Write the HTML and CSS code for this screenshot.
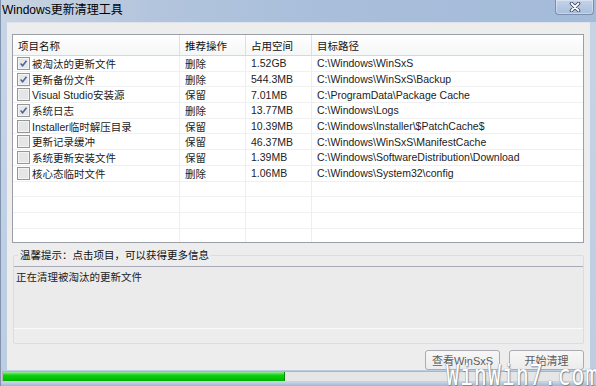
FILE: index.html
```html
<!DOCTYPE html>
<html lang="zh-CN">
  <head>
    <meta charset="UTF-8" />
    <meta name="viewport" content="width=device-width, initial-scale=1.0" />
    <title>Windows更新清理工具</title>
    <link rel="stylesheet" href="styles.css">
  </head>
  <body>
    <div class="window">
      <div class="titlebar">
        <span class="title">Windows更新清理工具</span>
        <button class="close" title="关闭">
          <svg width="12" height="10" viewBox="0 0 12 10">
            <path d="M2.5 1.5 L9.5 8.5 M9.5 1.5 L2.5 8.5" stroke="#3b4a60" stroke-width="3.6" stroke-linecap="round" />
            <path d="M2.5 1.5 L9.5 8.5 M9.5 1.5 L2.5 8.5" stroke="#fff" stroke-width="1.8" stroke-linecap="round" />
          </svg>
        </button>
      </div>

      <div class="client">
        <div class="list">
          <div class="row head">
            <div class="cell">项目名称</div>
            <div class="cell">推荐操作</div>
            <div class="cell">占用空间</div>
            <div class="cell">目标路径</div>
          </div>
          <div id="rows"></div>
        </div>

        <fieldset class="tips">
          <legend>温馨提示：点击项目，可以获得更多信息</legend>
          <div class="status">正在清理被淘汰的更新文件</div>
        </fieldset>

        <div class="actions">
          <button class="btn">查看WinSxS</button>
          <button class="btn">开始清理</button>
        </div>
      </div>

      <div class="progress">
        <div class="progress-fill" style="width: 47.7%"></div>
      </div>
      <div class="bottom-frame"></div>
    </div>

    <div class="watermark">WinWin7.com</div>

    <script>
      const items = [
        { name: "被淘汰的更新文件", action: "删除", size: "1.52GB", path: "C:\\Windows\\WinSxS", checked: true },
        { name: "更新备份文件", action: "删除", size: "544.3MB", path: "C:\\Windows\\WinSxS\\Backup", checked: true },
        { name: "Visual Studio安装源", action: "保留", size: "7.01MB", path: "C:\\ProgramData\\Package Cache", checked: false },
        { name: "系统日志", action: "删除", size: "13.77MB", path: "C:\\Windows\\Logs", checked: true },
        { name: "Installer临时解压目录", action: "保留", size: "10.39MB", path: "C:\\Windows\\Installer\\$PatchCache$", checked: false },
        { name: "更新记录缓冲", action: "保留", size: "46.37MB", path: "C:\\Windows\\WinSxS\\ManifestCache", checked: false },
        { name: "系统更新安装文件", action: "保留", size: "1.39MB", path: "C:\\Windows\\SoftwareDistribution\\Download", checked: false },
        { name: "核心态临时文件", action: "删除", size: "1.06MB", path: "C:\\Windows\\System32\\config", checked: false },
      ];

      const checkOn =
        '<svg width="13" height="13" viewBox="0 0 13 13"><rect x="0.5" y="0.5" width="12" height="12" fill="#f4f4f4" stroke="#969696"/><rect x="2" y="2" width="9" height="9" fill="#e6e7e9"/><path d="M3.6 6.6 L5.6 8.8 L9.5 3.7" fill="none" stroke="#4a6298" stroke-width="1.5"/></svg>';
      const checkOff =
        '<svg width="13" height="13" viewBox="0 0 13 13"><rect x="0.5" y="0.5" width="12" height="12" fill="#f4f4f4" stroke="#969696"/><rect x="2" y="2" width="9" height="9" fill="#e4e5e7"/></svg>';

      const rows = document.getElementById("rows");

      items.forEach((item) => {
        const row = document.createElement("div");
        row.className = "row";
        row.innerHTML = `
          <div class="cell name">${item.checked ? checkOn : checkOff}<span>${item.name}</span></div>
          <div class="cell">${item.action}</div>
          <div class="cell">${item.size}</div>
          <div class="cell">${item.path}</div>`;
        rows.appendChild(row);
      });

      // empty grid lines below the items
      for (let i = 0; i < 4; i++) {
        const row = document.createElement("div");
        row.className = "row";
        row.innerHTML = '<div class="cell"></div><div class="cell"></div><div class="cell"></div><div class="cell"></div>';
        rows.appendChild(row);
      }
    </script>
  </body>
</html>
```

FILE: styles.css
```css
body {
  margin: 0;
  width: 596px;
  height: 386px;
  overflow: hidden;
  position: relative;
  font-family: "Liberation Sans", "Noto Sans CJK SC", sans-serif;
  font-size: 10.5px;
  color: #222;
  background-color: #bfcfe3;
}
.window {
  display: flex;
  flex-direction: column;
  height: 386px;
  box-sizing: border-box;
  border-left: 1px solid #8094b0;
  background: linear-gradient(to bottom, #c6d4e6, #bccde2);
}
.titlebar {
  height: 22px;
  display: flex;
  justify-content: space-between;
  align-items: flex-start;
  background: linear-gradient(to right, #c9d4e2 0%, #b3c5dd 25%, #a8bedb 55%, #a4bbd9 100%);
}
.title {
  font-size: 12px;
  line-height: 20px;
  padding-left: 1px;
  color: #000;
}
.close {
  width: 39px;
  height: 15px;
  margin-right: 2px;
  padding: 0;
  display: flex;
  align-items: center;
  justify-content: center;
  border: 1px solid #7a8ead;
  border-top: none;
  border-radius: 0 0 4px 4px;
  background: linear-gradient(to bottom, #c4d3e8, #a9bedb);
  box-shadow: inset 0 0 0 1px rgba(255, 255, 255, 0.35);
}
.client {
  height: 348px;
  margin: 0 6px 0 6px;
  padding: 11px 6px 0 5px;
  box-sizing: border-box;
  background-color: #ededed;
  border-top: 1px solid #dfe4ea;
  display: flex;
  flex-direction: column;
}
.list {
  height: 210px;
  box-sizing: border-box;
  border: 1px solid #9a9ea6;
  background-color: #fff;
  overflow: hidden;
}
.row {
  display: grid;
  grid-template-columns: 167px 66px 66px 1fr;
  height: 15.7px;
  box-sizing: border-box;
  border-bottom: 1px solid #eef0f2;
}
.cell {
  display: flex;
  align-items: center;
  padding-left: 5px;
  white-space: nowrap;
  overflow: hidden;
  border-right: 1px solid #eceef1;
}
.cell:last-child {
  border-right: none;
}
.row.head {
  height: 21px;
  border-bottom: 1px solid #d6d8db;
  background: linear-gradient(to bottom, #ffffff, #f5f6f7);
}
.row.head .cell {
  border-right-color: #dddfe2;
  color: #111;
}
.cell.name {
  padding-left: 4px;
  gap: 2px;
}
.cell.name svg {
  flex: none;
}
.tips {
  margin: 5px 0 0 1px;
  padding: 0;
  height: 96px;
  box-sizing: border-box;
  border: 1px solid #d9dde2;
  border-radius: 2px;
}
.tips legend {
  margin-left: 4px;
  padding: 0 2px;
  line-height: 14px;
  font-size: 10.5px;
  color: #111;
}
.status {
  margin-top: 4px;
  height: 63px;
  box-sizing: border-box;
  padding: 3px 2px 0;
  line-height: 14px;
  background-color: #ebebeb;
  border-top: 1px solid #a9a9b8;
  border-bottom: 1px solid #fafafa;
}
.actions {
  display: flex;
  justify-content: flex-end;
  gap: 9px;
  margin-top: 6px;
}
.btn {
  width: 75px;
  height: 20px;
  padding: 0;
  font-family: inherit;
  font-size: 11px;
  color: #5c5c5c;
  border: 1px solid #a9acb0;
  border-radius: 3px;
  background: linear-gradient(to bottom, #f7f7f7, #ececec);
}
.progress {
  height: 9px;
  margin: 1px 3px 0 1px;
  border: 1px solid #b4b4b4;
  border-bottom-color: #d0d0d0;
  background-color: #e6e6e6;
}
.progress-fill {
  height: 100%;
  background: linear-gradient(to bottom, #9ee99e 0%, #10d210 35%, #00c400 75%, #08a808 100%);
  border-right: 1px solid #0a8a0a;
}
.bottom-frame {
  flex: 1;
  background: linear-gradient(to bottom, #c8d6e7, #9fb6d4);
}
.watermark {
  position: absolute;
  left: 446px;
  top: 361px;
  font-family: "DejaVu Sans Mono", monospace;
  font-size: 28px;
  line-height: 30px;
  color: #fff;
  transform: scaleX(0.78);
  transform-origin: left top;
  letter-spacing: 1px;
  text-shadow: 0 0 1px #6a7280, 1px 1px 1px #7d8594;
}
```
